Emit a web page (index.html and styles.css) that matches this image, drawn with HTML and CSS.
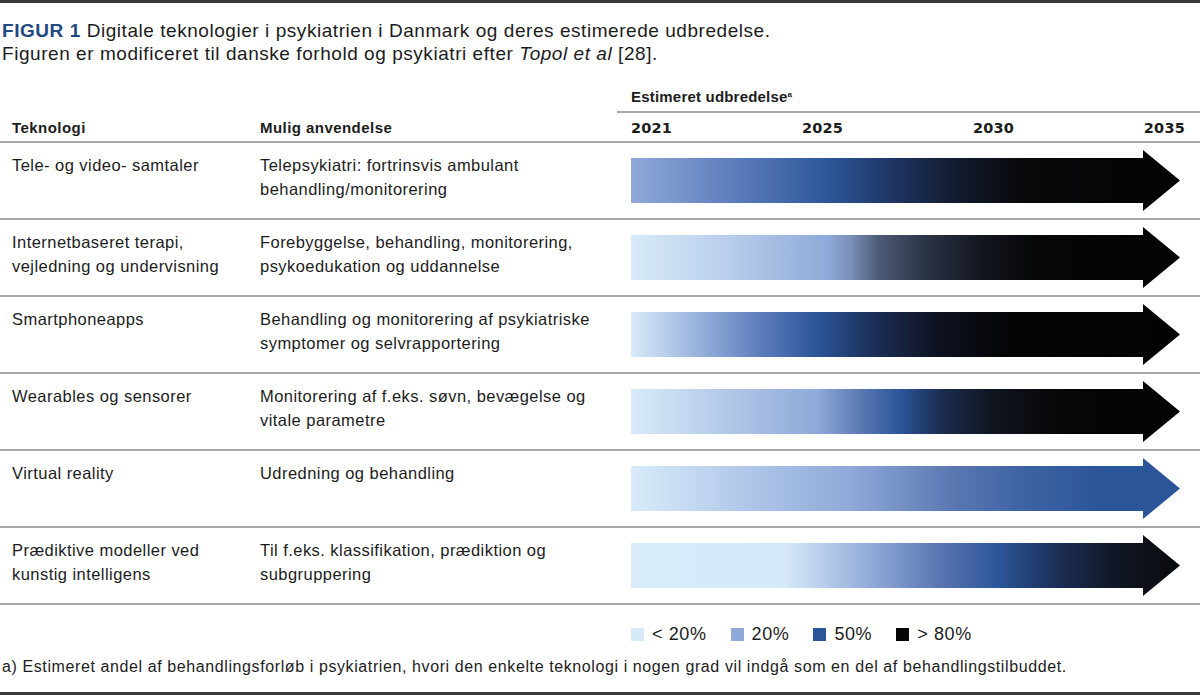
FILE: index.html
```html
<!DOCTYPE html>
<html lang="da">
<head>
<meta charset="utf-8">
<title>Figur 1</title>
<link rel="stylesheet" href="styles.css">
</head>
<body>
<div class="figure">
  <div class="caption">
    <p><span class="fig">FIGUR 1</span> Digitale teknologier i psykiatrien i Danmark og deres estimerede udbredelse.</p>
    <p>Figuren er modificeret til danske forhold og psykiatri efter <em>Topol et al</em> [28].</p>
  </div>

  <div class="table">
    <div class="row head-top">
      <div class="c1"></div>
      <div class="c2"></div>
      <div class="c3 est">Estimeret udbredelse<sup>a</sup></div>
    </div>
    <div class="row head">
      <div class="c1">Teknologi</div>
      <div class="c2">Mulig anvendelse</div>
      <div class="c3 years"><span>2021</span><span>2025</span><span>2030</span><span>2035</span></div>
    </div>

    <div class="row body">
      <div class="c1">Tele- og video- samtaler</div>
      <div class="c2">Telepsykiatri: fortrinsvis ambulant<br>behandling/monitorering</div>
      <div class="c3"><div class="arrow a1"></div></div>
    </div>
    <div class="row body">
      <div class="c1">Internetbaseret terapi,<br>vejledning og undervisning</div>
      <div class="c2">Forebyggelse, behandling, monitorering,<br>psykoedukation og uddannelse</div>
      <div class="c3"><div class="arrow a2"></div></div>
    </div>
    <div class="row body">
      <div class="c1">Smartphoneapps</div>
      <div class="c2">Behandling og monitorering af psykiatriske<br>symptomer og selvrapportering</div>
      <div class="c3"><div class="arrow a3"></div></div>
    </div>
    <div class="row body">
      <div class="c1">Wearables og sensorer</div>
      <div class="c2">Monitorering af f.eks. søvn, bevægelse og<br>vitale parametre</div>
      <div class="c3"><div class="arrow a4"></div></div>
    </div>
    <div class="row body">
      <div class="c1">Virtual reality</div>
      <div class="c2">Udredning og behandling</div>
      <div class="c3"><div class="arrow a5"></div></div>
    </div>
    <div class="row body">
      <div class="c1">Prædiktive modeller ved<br>kunstig intelligens</div>
      <div class="c2">Til f.eks. klassifikation, prædiktion og<br>subgruppering</div>
      <div class="c3"><div class="arrow a6"></div></div>
    </div>
  </div>

  <div class="legend">
    <div class="item"><span class="sw s1"></span>&lt; 20%</div>
    <div class="item"><span class="sw s2"></span>20%</div>
    <div class="item"><span class="sw s3"></span>50%</div>
    <div class="item"><span class="sw s4"></span>&gt; 80%</div>
  </div>

  <p class="footnote">a) Estimeret andel af behandlingsforløb i psykiatrien, hvori den enkelte teknologi i nogen grad vil indgå som en del af behandlingstilbuddet.</p>
</div>
</body>
</html>
```

FILE: styles.css
```css
html, body {
  margin: 0;
  padding: 0;
  background: #ffffff;
}

body {
  font-family: "Liberation Sans", Arial, sans-serif;
  color: #1c1c1c;
}

.figure {
  width: 1200px;
  height: 695px;
  box-sizing: border-box;
  border-top: 3px solid #3a3a3a;
  display: flex;
  flex-direction: column;
}

.caption {
  margin-top: 16px;
  padding-left: 2px;
  font-size: 19px;
  line-height: 23px;
  letter-spacing: 0.55px;
}

.caption p {
  margin: 0;
}

.caption .fig {
  color: #21497f;
  font-weight: bold;
}

.table {
  margin-top: 22px;
}

.row {
  display: grid;
  grid-template-columns: 260px 357px 1fr;
}

.c1 {
  padding-left: 12px;
}

.c3 {
  padding-left: 14px;
  padding-right: 15px;
}

.head-top .est {
  font-size: 15px;
  font-weight: bold;
  line-height: 20px;
  padding-top: 0;
  padding-bottom: 4px;
  letter-spacing: 0.2px;
  border-bottom: 2px solid #a8a8a8;
}

.est sup {
  font-size: 8px;
  vertical-align: 5px;
  line-height: 0;
}

.head {
  font-size: 15px;
  font-weight: bold;
  line-height: 20px;
  letter-spacing: 0.45px;
  border-bottom: 2px solid #a8a8a8;
}

.head > div {
  padding-top: 5px;
  padding-bottom: 3px;
}

.years {
  display: flex;
  justify-content: space-between;
  font-family: "DejaVu Sans", "Liberation Sans", sans-serif;
  font-size: 14.5px;
  letter-spacing: 0.2px;
}

.body {
  height: 77px;
  box-sizing: border-box;
  border-bottom: 2px solid #a8a8a8;
  font-size: 16.5px;
  line-height: 24px;
  letter-spacing: 0.45px;
}

.body .c1,
.body .c2 {
  padding-top: 10px;
}

.body .c3 {
  display: flex;
  align-items: center;
}

.arrow {
  width: 549px;
  height: 61px;
  clip-path: polygon(0 8px, 512px 8px, 512px 0, 100% 50%, 512px 100%, 512px 53px, 0 53px);
}

.a1 {
  background: linear-gradient(to right, #8fa9d8 0%, #5f7fbd 18%, #2c5699 36%, #1e3461 48%, #12192b 60%, #070809 72%, #030303 100%);
}

.a2 {
  background: linear-gradient(to right, #d8ebf9 0%, #b7cdeb 18%, #8fa9d9 36%, #7a8fb8 40%, #4e5c78 45%, #2a3244 54%, #13161f 64%, #060607 74%, #030303 100%);
}

.a3 {
  background: linear-gradient(to right, #d8ebf9 0%, #9ab3dd 12%, #5a7bbb 24%, #2b5599 34%, #1b2c52 45%, #0e1220 56%, #050506 68%, #030303 100%);
}

.a4 {
  background: linear-gradient(to right, #d8ebf9 0%, #b5cbea 16%, #8fa9d8 34%, #5a78b2 42%, #2b5599 49%, #1b2a4c 57%, #10151f 66%, #060607 78%, #030303 100%);
}

.a5 {
  background: linear-gradient(to right, #d8ebf9 0%, #b2c9ea 20%, #8fa9d8 40%, #5b79b3 58%, #3d62a2 72%, #2b5599 86%, #2b5599 100%);
}

.a6 {
  background: linear-gradient(to right, #d8ebf9 0%, #d6e9f8 28%, #b3c9e9 36%, #8fa9d8 44%, #5a77b0 56%, #2b5599 67%, #1c2e55 78%, #111726 88%, #0a0a0c 100%);
}

.legend {
  margin-top: 19px;
  padding-left: 631px;
  display: flex;
  gap: 24px;
  font-size: 18px;
  line-height: 20px;
  letter-spacing: 0.6px;
}

.item {
  display: flex;
  align-items: center;
  gap: 8px;
}

.sw {
  display: inline-block;
  width: 13px;
  height: 13px;
}

.s1 { background: #d6eaf8; }
.s2 { background: #8fa9d8; }
.s3 { background: #2b5599; }
.s4 { background: #050505; }

.footnote {
  margin: 13px 0 0 0;
  padding-left: 2px;
  font-size: 16px;
  line-height: 20px;
  letter-spacing: 0.6px;
  flex: 1;
  border-bottom: 3px solid #3a3a3a;
}
```
